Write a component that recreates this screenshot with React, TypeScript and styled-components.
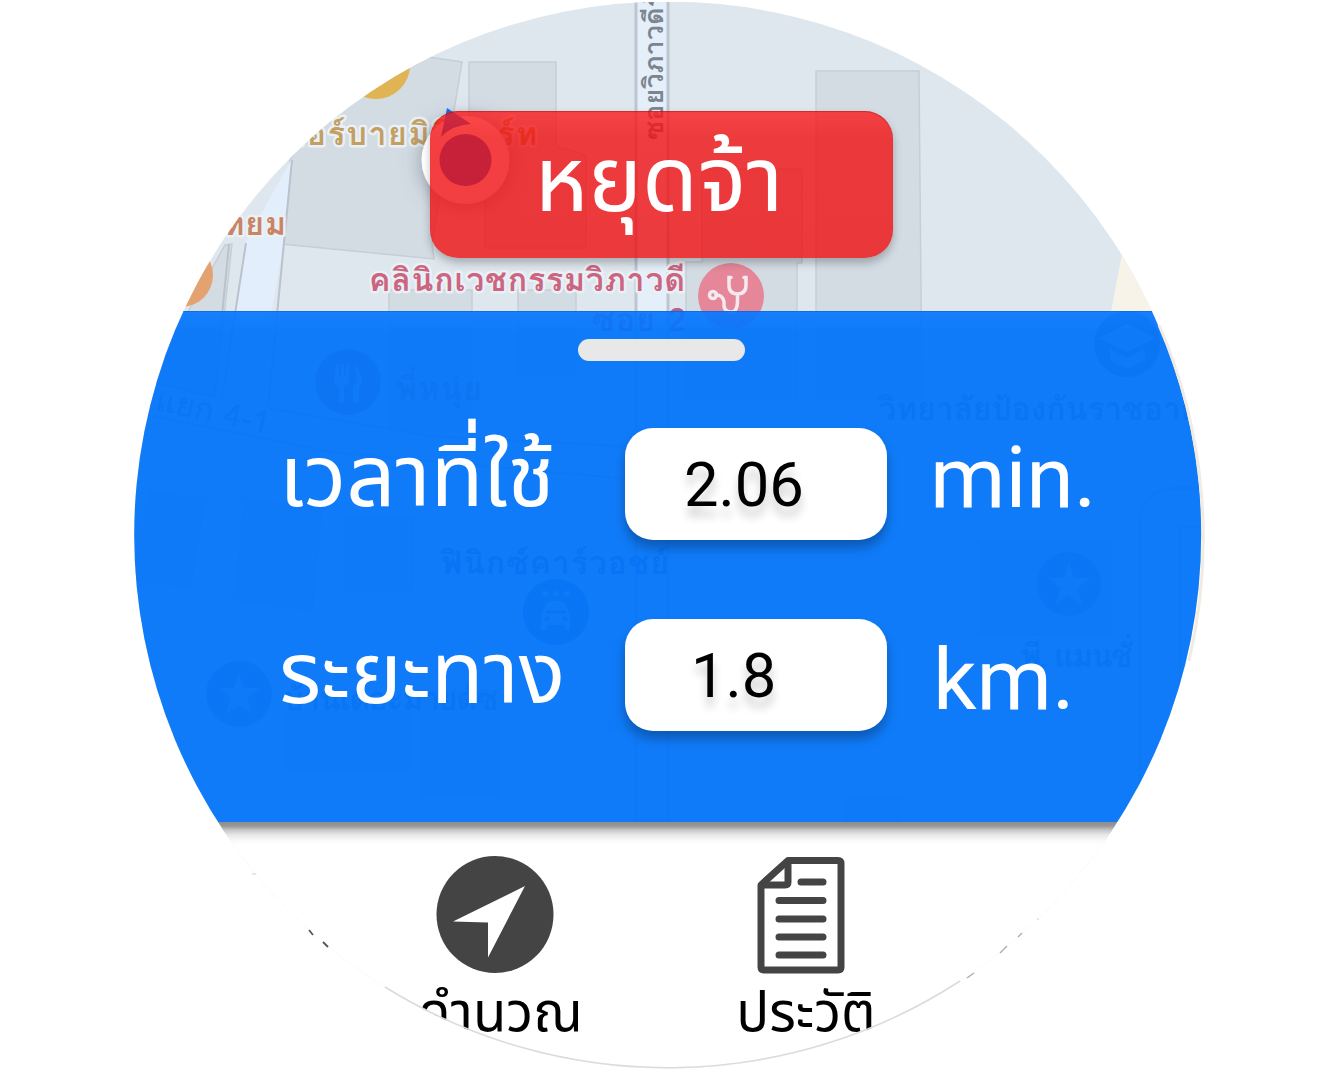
import React from 'react';
import styled, { createGlobalStyle } from 'styled-components';

const GlobalStyle = createGlobalStyle`
  * { box-sizing: border-box; }
  body { margin: 0; background: #fff; overflow: hidden; }
`;

const thaiStack = `Roboto, "Noto Sans Thai", "Noto Sans Thai UI", "Noto Sans", sans-serif`;

const Page = styled.main`
  height: 1080px;
  display: flex;
  justify-content: center;
  padding-top: 2px;
  position: relative;
  font-family: ${thaiStack};
`;

const Lens = styled.section`
  width: 1068px;
  height: 1067px;
  position: relative;
  display: flex;
  flex-direction: column;
  clip-path: circle(533.5px at 533.7px 533px);
  background: #fff;
`;

const MapLayer = styled.svg`
  position: absolute;
  left: 0;
  top: 0;
`;

const EdgeLayer = styled.svg`
  position: absolute;
  left: 0;
  top: 0;
  pointer-events: none;
`;

const MapArea = styled.div`
  height: 309px;
  flex: none;
  display: flex;
  padding: 109px 0 0 296px;
  position: relative;
`;

const StopButton = styled.button`
  width: 463px;
  height: 147px;
  border: 0;
  border-radius: 28px;
  padding: 0 5px 8px 0;
  color: #fff;
  font: 400 91px/1 ${thaiStack};
  background: linear-gradient(rgba(253, 26, 28, 0.8), rgba(240, 15, 17, 0.8) 18%, rgba(238, 14, 16, 0.8));
  box-shadow: 0 5px 9px rgba(0, 0, 0, 0.25), inset 0 1px 1px rgba(150, 0, 0, 0.4);
`;

const Sheet = styled.div`
  height: 511px;
  flex: none;
  position: relative;
  display: flex;
  flex-direction: column;
  align-items: center;
  padding-top: 27px;
  background: linear-gradient(rgba(8, 120, 255, 0.935), rgba(3, 116, 249, 0.94) 22px);
  border-top: 1px solid rgba(20, 90, 190, 0.35);
`;

const Handle = styled.div`
  width: 167px;
  height: 22px;
  flex: none;
  margin-right: 13px;
  border-radius: 11px;
  background: #e8e8e8;
`;

const Metrics = styled.div`
  width: 100%;
  padding: 67px 0 0 145px;
  display: grid;
  grid-template-columns: 346px 262px 1fr;
  grid-auto-rows: 112px;
  row-gap: 79px;
`;

const Label = styled.span<{ $line: number }>`
  color: #fff;
  font-size: 86.500px;
  line-height: ${p => p.$line}px;
  white-space: nowrap;
`;

const Value = styled.output<{ $inset: number }>`
  height: 112px;
  border-radius: 28px;
  background: #fff;
  color: #000;
  font-size: 61.500px;
  line-height: 114px;
  padding-left: ${p => p.$inset}px;
  text-shadow: 0 10px 10px rgba(0, 0, 0, 0.2);
  box-shadow: 0 8px 11px rgba(0, 0, 0, 0.27);
`;

const Unit = styled.span<{ $line: number; $inset: number }>`
  color: #fff;
  font-size: 86px;
  line-height: ${p => p.$line}px;
  padding-left: ${p => p.$inset}px;
  white-space: nowrap;
`;

const NavBar = styled.nav`
  flex: 1;
  position: relative;
  display: flex;
  padding: 34px 0 0 280px;
  background: linear-gradient(#8d8d8d, #989898 4px, #c6c6c6 8px, #e8e8e8 13px, #fafafa 19px, #fff 23px);
`;

const NavItem = styled.a<{ $width: number }>`
  width: ${p => p.$width}px;
  display: flex;
  flex-direction: column;
  align-items: center;
  color: #000;
`;

const NavLabel = styled.span`
  padding-left: 10px;
  font-size: 54.500px;
  line-height: 77px;
  white-space: nowrap;
`;

const halo = { stroke: '#e9f0f6', strokeWidth: 5, paintOrder: 'stroke' as const, strokeLinejoin: 'round' as const };

const mapFont = 'Loma, Garuda, "Noto Sans Thai Looped", "Noto Sans Thai", "Noto Sans", sans-serif';

function StreetMap() {
  return (
    <MapLayer width="1068" height="1067" viewBox="134 2 1068 1067">
      <rect x="134" y="2" width="1068" height="1067" fill="#dfe7ee" />
      <g fill="#d3dbe3" stroke="#c6ced6" strokeWidth="1.5">
        <path d="M290 160L300 140 380 50 462 62 432 244 434 259 282 244Z" />
        <path d="M469 62H556V146L586 155V248H485V163H469Z" />
        <path d="M816 71H919L922 400H816Z" />
        <path d="M702 169H802V263H797V400H686V262H702Z" />
        <path d="M389 290H472V430H389ZM518 290H576V375H518Z" />
        <path d="M225 245L232 244 215 398 150 380Z" />
        <path d="M150 490L205 500 190 588 134 580ZM245 500L322 508 312 611 234 600Z" />
        <path d="M345 518H413V590H345ZM285 710H410V770H285ZM420 690H500V797H420Z" />
        <path d="M980 540H1110V635H980ZM610 640H700V730H610ZM845 797H900V822H845Z" />
      </g>
      <path d="M291 160L245 243 225 400 256 408 283 245 291 165Z" fill="#e2eefb" />
      <path d="M292 160L268 408 430 436 640 447M246 243L222 398M229 244L214 397 134 378M134 412L330 452 640 480" fill="none" stroke="#bac3cd" strokeWidth="2" />
      <path d="M636 0V820H668V0" fill="#e5effa" stroke="#bdc6d0" strokeWidth="3" />
      <path d="M1122 254L1205 372V312H1111Z" fill="#f7f3e8" />
      <path d="M1140 820V520Q1142 490 1175 488H1202M1180 820V527H1202" fill="none" stroke="#bcc6d0" strokeWidth="3" />
      <circle cx="376" cy="65" r="34" fill="#e0b452" />
      <circle cx="181" cy="275" r="32" fill="#e3a26f" />
      <g fontFamily={mapFont} fontWeight="700" fontSize="32">
        <text x="270" y="145" fill="#c39f62" textLength="267" {...halo}>เซอร์บายมินิมาร์ท</text>
        <text x="184" y="235" fill="#ca8464" textLength="102" {...halo}>กาทยม</text>
        <text x="369" y="291" fill="#cb6580" textLength="316" {...halo}>คลินิกเวชกรรมวิภาวดี</text>
        <text x="592" y="331" fill="#c05c82" textLength="94">ซอย 2</text>
        <text x="396" y="400" fill="#a68068" textLength="86">พี่หนุ่ย</text>
        <text x="878" y="420" fill="#7389aa" textLength="350">วิทยาลัยป้องกันราชอาณา</text>
        <text x="441" y="574" fill="#5578b8" textLength="228">ฟินิกซ์คาร์วอชย์</text>
        <text x="1018" y="667" fill="#6986a6" textLength="112">พี. แมนชั่</text>
        <text x="282" y="710" fill="#6b87a8" textLength="215">บ้านเดอะมายด์ซ</text>
        <text transform="translate(154 410) rotate(12)" fill="#85929e" fontWeight="400">แยก 4-1</text>
        <text transform="translate(646 140) rotate(-90)" y="17" fontSize="27" fontWeight="600" fill="#7b8590" textLength="177">ซอยวิภาวดีรังสิ</text>
      </g>
      <circle cx="731" cy="296" r="33" fill="#e58798" />
      <g fill="none" stroke="#f3e9ef" strokeWidth="3.500" strokeLinecap="round">
        <path d="M731 277.500H729V285Q729 294 737.500 294T746 285V277.500H744M737.500 295V302Q737 313 730 312T724 302Q723 295 716 295" />
        <circle cx="713" cy="295" r="3.500" />
      </g>
      <g fill="#7993b2">
        <circle cx="1127" cy="344" r="33" />
        <circle cx="348" cy="382" r="33" fill="#a8907c" />
        <circle cx="556" cy="612" r="33" fill="#5880c0" />
        <circle cx="1069" cy="584" r="32" fill="#8aa0ba" />
        <circle cx="239" cy="694" r="33" fill="#8aa0ba" />
      </g>
      <g fill="#d0dcea">
        <path d="M1127 324L1156 338 1127 352 1098 338ZM1110 349L1127 358 1145 349V360L1127 369 1110 360Z" />
        <path d="M336 364h3v12h2v-12h3v12h2v-12h3v15q0 5-5 7v17h-5v-17q-5-2-5-7ZM355 365q7 6 7 18l-3 5v14h-6v-16l4-5Z" />
        <path id="star" d="M1069 563L1074 578H1090L1077 588 1082 604 1069 595 1056 604 1061 588 1048 578H1064Z" />
        <use href="#star" x="-830" y="110" />
        <path d="M546 604L550 601H562L566 604 570 615V630H565V625H547V630H541V615Z" />
        <g fill="none" stroke="#5880c0" strokeWidth="3"><path d="M546 612H566" /><circle cx="547" cy="619" r="1" /><circle cx="565" cy="619" r="1" /></g>
        <circle cx="545" cy="594" r="3" /><circle cx="556" cy="594" r="3" /><circle cx="567" cy="594" r="3" />
      </g>
      <defs>
        <filter id="markerShadow" x="-40%" y="-40%" width="180%" height="180%">
          <feDropShadow dx="0" dy="2" stdDeviation="10" floodColor="#66717c" floodOpacity=".6" />
        </filter>
      </defs>
      <circle cx="465.500" cy="160" r="44" fill="#fff" filter="url(#markerShadow)" />
      <path d="M441 137L447 108 471 124Q452 125 441 137Z" fill="#176fe0" />
      <circle cx="465.500" cy="160" r="26" fill="#2565d9" />
    </MapLayer>
  );
}

function NavigateIcon() {
  return (
    <svg width="118" height="118" viewBox="0 0 118 118">
      <circle cx="59" cy="58.500" r="58.500" fill="#444" />
      <path d="M89 30L17 65.500 52 66.500V101.500Z" fill="#fff" />
    </svg>
  );
}

function DocumentIcon() {
  return (
    <svg width="88" height="118" viewBox="0 0 88 118" fill="none" stroke="#444">
      <path d="M31 4.500H81Q84 4.500 84 7.500V111Q84 114 81 114H7Q4 114 4 111V29Z" strokeWidth="7" strokeLinejoin="round" />
      <path d="M31 5V26Q31 29 28 29H6" strokeWidth="7" />
      <path d="M44 26H66M22 44.500H66M22 63H66M22 81H66M22 99H66" strokeWidth="7" strokeLinecap="round" />
    </svg>
  );
}

function LensEdge() {
  return (
    <EdgeLayer width="1336" height="1080" viewBox="0 0 1336 1080" fill="none">
      <path d="M1159 325A535 535 0 0 1 1189 661" stroke="#f1ebe2" strokeWidth="3" />
      <path d="M385 987A536 536 0 0 0 960 981" stroke="#dedad7" strokeWidth="1.5" />
      <path d="M309 930L313 935M323 942L328 947" stroke="#555" strokeWidth="1.800" />
      <path d="M1000 953L1007 946M1018 937L1022 933M967 978L974 973" stroke="#aaa" strokeWidth="1.300" />
      <path d="M252 874H256M1037 919H1039" stroke="#d0d0d0" />
    </EdgeLayer>
  );
}

export default function App() {
  return (
    <>
      <GlobalStyle />
      <Page>
        <Lens>
          <StreetMap />
          <MapArea>
            <StopButton>หยุดจ้า</StopButton>
          </MapArea>
          <Sheet>
            <Handle />
            <Metrics>
              <Label $line={97}>เวลาที่ใช้</Label>
              <Value $inset={59}>2.06</Value>
              <Unit $line={99} $inset={43}>min.</Unit>
              <Label $line={109}>ระยะทาง</Label>
              <Value $inset={66}>1.8</Value>
              <Unit $line={122} $inset={46}>km.</Unit>
            </Metrics>
          </Sheet>
          <NavBar>
            <NavItem $width={162}><NavigateIcon /><NavLabel>คำนวณ</NavLabel></NavItem>
            <NavItem $width={450}><DocumentIcon /><NavLabel>ประวัติ</NavLabel></NavItem>
          </NavBar>
        </Lens>
        <LensEdge />
      </Page>
    </>
  );
}
